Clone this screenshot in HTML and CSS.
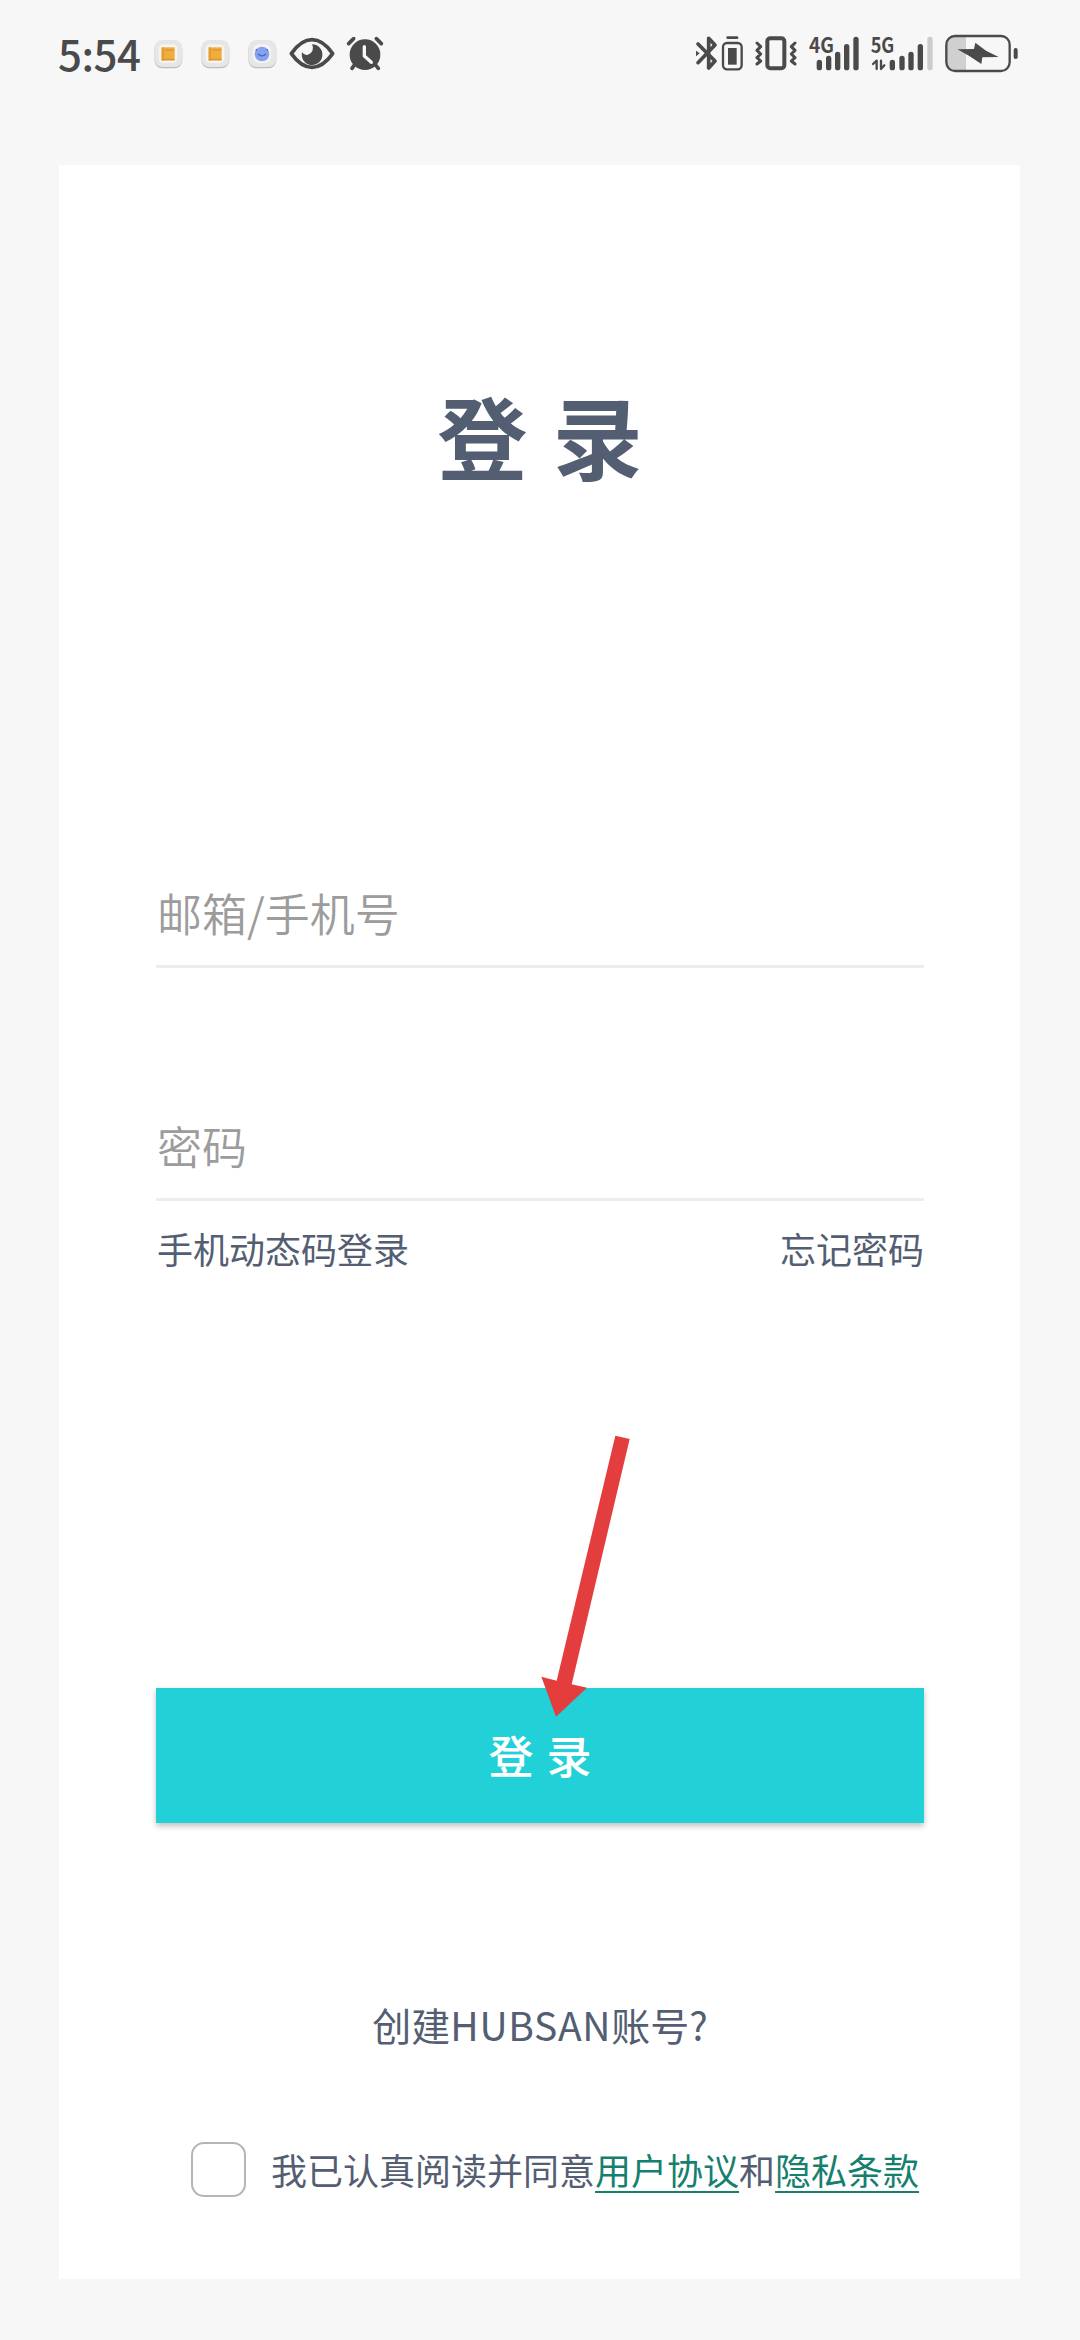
FILE: index.html
```
<!DOCTYPE html>
<html lang="zh-CN">
<head>
  <meta charset="UTF-8">
  <meta name="viewport" content="width=device-width, initial-scale=1.0">
  <title>登录</title>
  <link rel="stylesheet" href="styles.css">
</head>
<body>
  <div class="status-bar">
    <div class="status-left">
      <span class="time">5:54</span>
      <svg class="app-icon" viewBox="323 0 120 210">
        <rect class="tile-shadow" x="342" y="64" width="84" height="81" rx="24"/>
        <rect class="tile" x="342" y="60" width="84" height="81" rx="24"/>
        <rect class="tile-inner" x="355" y="73" width="56" height="56" rx="14"/>
        <rect class="book" x="363" y="82" width="40" height="40"/>
        <path class="book-line" d="M368 82v40M375 90h27M366 118h37"/>
      </svg>
      <svg class="app-icon" viewBox="323 0 120 210">
        <rect class="tile-shadow" x="342" y="64" width="84" height="81" rx="24"/>
        <rect class="tile" x="342" y="60" width="84" height="81" rx="24"/>
        <rect class="tile-inner" x="355" y="73" width="56" height="56" rx="14"/>
        <rect class="book" x="363" y="82" width="40" height="40"/>
        <path class="book-line" d="M368 82v40M375 90h27M366 118h37"/>
      </svg>
      <svg class="app-icon" viewBox="604 0 120 210">
        <rect class="tile-shadow" x="623" y="64" width="84" height="81" rx="24"/>
        <rect class="tile" x="623" y="60" width="84" height="81" rx="24"/>
        <rect class="tile-inner" x="636" y="73" width="56" height="56" rx="20"/>
        <circle class="face" cx="664" cy="102" r="22"/>
        <path class="face-line" d="M652 102q12 11 24 0M647 92v-4M680 92v-4"/>
      </svg>
      <svg class="eye" viewBox="747 0 138 210">
        <path class="line" stroke-width="11" d="M754 101Q783 59 816 59Q849 59 878 101Q849 142 816 142Q783 142 754 101Z"/>
        <path class="solid" d="M816 73A21 21 0 0 1 804 104Q795 108 786 97A31 31 0 1 0 816 73Z"/>
      </svg>
      <svg class="alarm" viewBox="906 0 138 210">
        <circle class="solid" cx="975" cy="104" r="46"/>
        <path class="line" stroke-width="11" d="M926 71L941 56M1024 71L1009 56M944 134L936 145M1006 134L1015 145"/>
        <path class="cut" stroke-width="10" d="M973 80V108L994 127"/>
      </svg>
    </div>
    <div class="status-right">
      <svg class="bluetooth" viewBox="45 0 72 210">
        <path class="line" stroke-width="11" d="M54 72L105 123L86 144V55L105 75L54 128"/>
        <path class="solid" d="M48 92L59 100L48 109Z"/>
      </svg>
      <svg class="device-battery" viewBox="123 0 69 210">
        <path class="line" stroke-width="8" d="M143 53H171"/>
        <rect class="line" stroke-width="7" x="129" y="69" width="56" height="79" rx="12"/>
        <rect class="solid" x="144" y="84" width="26" height="50"/>
      </svg>
      <svg class="vibrate" viewBox="222 0 132 210">
        <rect class="line" stroke-width="12" x="262" y="55" width="51" height="90" rx="9"/>
        <path class="line" stroke-width="9" d="M231 69L242 80L231 91L242 102L231 113L242 123L231 132M345 69L334 80L345 91L334 102L345 113L334 123L345 132"/>
      </svg>
      <svg class="signal" viewBox="387 0 153 210">
        <text class="network" x="387" y="98" textLength="75" lengthAdjust="spacingAndGlyphs">4G</text>
        <path class="line" stroke-width="16" d="M418 127V143M446 115V143M473 103V143M500 80V143M528 58V143"/>
      </svg>
      <svg class="signal-data" viewBox="570 0 195 210">
        <text class="network" x="572" y="98" textLength="71" lengthAdjust="spacingAndGlyphs">5G</text>
        <path class="line" stroke-width="7" d="M579 132L590 122V147M603 122V147L613 136"/>
        <path class="line" stroke-width="16" d="M637 127V143M666 115V143M693 103V143M721 80V143"/>
        <path class="weak" stroke-width="16" d="M750 58V143"/>
      </svg>
      <svg class="battery" viewBox="792 0 225 210">
        <path class="level" d="M858 47H824Q798 47 798 74V127Q798 153 824 153H858Z"/>
        <rect class="line" stroke-width="7" x="799" y="48" width="190" height="105" rx="26"/>
        <path class="solid" d="M832 88L882 87L886 68L918 92L956 111L907 112L904 132L868 108Z"/>
        <path class="line" stroke-width="12" d="M1007 90V111"/>
      </svg>
    </div>
  </div>

  <main class="card">
    <h1 class="title">登 录</h1>
    <form class="login-form">
      <div class="field field-account">邮箱/手机号</div>
      <div class="field field-password">密码</div>
      <div class="links">
        <span>手机动态码登录</span>
        <span>忘记密码</span>
      </div>
      <button type="button" class="login-btn">登 录</button>
    </form>
    <p class="create">创建<span class="brand">HUBSAN</span>账号?</p>
    <div class="agreement">
      <span class="checkbox"></span>
      <p class="agreement-text">我已认真阅读并同意<a class="doc-link">用户协议</a>和<a class="doc-link">隐私条款</a></p>
    </div>
  </main>

  <svg class="arrow" viewBox="0 0 420 930">
    <path d="M286 47L329 57L155 793L201 803L108 890L64 770L110 782Z"/>
  </svg>
</body>
</html>
```
FILE: styles.css
```
* {
  box-sizing: border-box;
}

body {
  margin: 0;
  height: 2340px;
  position: relative;
  overflow: hidden;
  background: #f7f7f7;
  color: #535e72;
  font-family: "Noto Sans CJK SC", sans-serif;
}

h1, p {
  margin: 0;
  font-weight: 400;
}

/* status bar */
.status-bar {
  height: 165px;
  padding: 20px 61px 0 58px;
  display: flex;
  justify-content: space-between;
}

.status-left,
.status-right {
  height: 70px;
  display: flex;
  align-items: center;
}

.status-left {
  gap: 7px;
}

.status-bar svg {
  display: block;
  height: 70px;
  flex: none;
}

.time {
  width: 83px;
  padding-bottom: 5px;
  color: #4a4a4a;
  font-size: 42px;
  font-weight: 500;
  line-height: 65px;
  letter-spacing: -0.5px;
  white-space: nowrap;
}

.app-icon {
  width: 40px;
}

.eye,
.alarm {
  width: 46px;
}

.bluetooth {
  width: 24px;
  margin-right: 2px;
}

.device-battery {
  width: 23px;
  margin-right: 10px;
}

.vibrate {
  width: 44px;
  margin-right: 11px;
}

.signal {
  width: 51px;
  margin-right: 10px;
}

.signal-data {
  width: 65px;
  margin-right: 9px;
}

.battery {
  width: 75px;
}

.solid,
.network {
  fill: #4a4a4a;
}

.line,
.cut,
.weak {
  fill: none;
  stroke: #4a4a4a;
  stroke-linecap: round;
  stroke-linejoin: round;
}

.cut {
  stroke: #f7f7f7;
}

.weak {
  stroke: #cccccc;
}

.level {
  fill: #d0d0d0;
}

.network {
  font-size: 64px;
  font-weight: 700;
}

.tile {
  fill: #e6e6e8;
}

.tile-shadow {
  fill: #bdbdbd;
}

.tile-inner {
  fill: #f5f4f3;
}

.book {
  fill: #f0ad3e;
}

.book-line {
  fill: none;
  stroke: #d18e2c;
  stroke-width: 3;
}

.face {
  fill: #86a2ee;
}

.face-line {
  fill: none;
  stroke: #4563c4;
  stroke-width: 4;
}

/* login card */
.card {
  width: 961px;
  height: 2114px;
  margin-left: 59px;
  padding: 0 96px 0 97px;
  display: flex;
  flex-direction: column;
  background: #ffffff;
}

.title {
  margin-top: 204px;
  font-size: 90px;
  font-weight: 700;
  line-height: 130px;
  text-align: center;
  word-spacing: 5px;
}

.login-form {
  margin-top: 364px;
}

.field {
  height: 105px;
  padding-left: 1px;
  border-bottom: 3px solid #ededed;
  color: #9c9c9c;
  font-size: 45px;
  font-weight: 350;
  line-height: 99px;
}

.field-password {
  margin-top: 128px;
}

.links {
  margin-top: 21px;
  padding: 0 0 0 1px;
  display: flex;
  justify-content: space-between;
  font-size: 36px;
  line-height: 52px;
}

.login-btn {
  display: block;
  width: 100%;
  height: 135px;
  margin-top: 414px;
  padding: 0 0 3px;
  border: 0;
  background: #22d1d7;
  box-shadow: 0 3px 6px rgba(0, 0, 0, 0.25);
  color: #ffffff;
  font-family: inherit;
  font-size: 45px;
  font-weight: 500;
  word-spacing: 3px;
}

.create {
  margin-top: 172px;
  font-size: 39px;
  line-height: 58px;
  text-align: center;
}

.brand {
  letter-spacing: 0.7px;
}

.agreement {
  margin: 89px 0 0 35px;
  display: flex;
  align-items: center;
  gap: 25px;
}

.checkbox {
  width: 55px;
  height: 55px;
  border: 2px solid #b5b5b5;
  border-radius: 13px;
}

.agreement-text {
  font-size: 36px;
  line-height: 55px;
  white-space: nowrap;
}

.doc-link {
  color: #16806f;
  text-decoration: underline;
  text-decoration-thickness: 2px;
  text-underline-offset: 6px;
}

/* pointer over the login button */
.arrow {
  position: absolute;
  left: 520px;
  top: 1420px;
  width: 140px;
  height: 310px;
  fill: #e43d3d;
}
```
